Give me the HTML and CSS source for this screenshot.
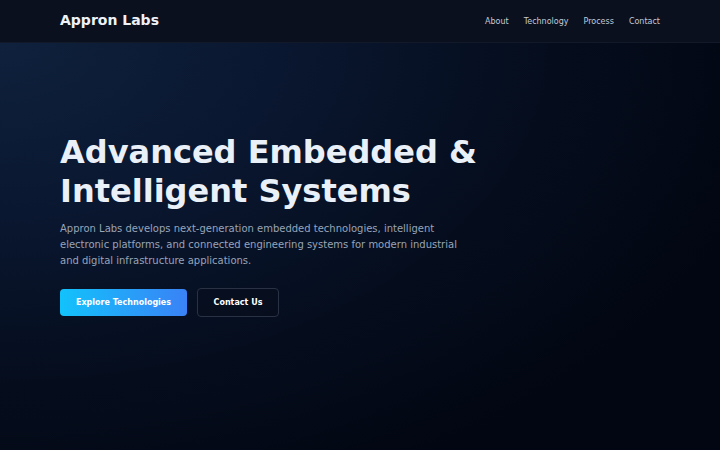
FILE: index.html
```html
<!DOCTYPE html>
<html lang="en">
<head>
<meta charset="utf-8">
<title>Appron Labs</title>
<link rel="stylesheet" href="styles.css">
</head>
<body>
<header class="site-header">
  <div class="header-inner">
    <div class="logo">Appron Labs</div>
    <nav class="nav">
      <a href="#">About</a>
      <a href="#">Technology</a>
      <a href="#">Process</a>
      <a href="#">Contact</a>
    </nav>
  </div>
</header>
<main class="hero">
  <div class="hero-inner">
    <h1 class="hero-title">Advanced Embedded &amp;<br>Intelligent Systems</h1>
    <p class="hero-text">Appron Labs develops next-generation embedded technologies, intelligent electronic platforms, and connected engineering systems for modern industrial and digital infrastructure applications.</p>
    <div class="actions">
      <a href="#" class="btn btn-primary">Explore Technologies</a>
      <a href="#" class="btn btn-outline">Contact Us</a>
    </div>
  </div>
</main>
</body>
</html>
```
FILE: styles.css
```css
* { box-sizing: border-box; }
html, body { margin: 0; padding: 0; }
body {
  font-family: "DejaVu Sans", sans-serif;
  background: #020617;
  color: #e2e8f0;
  width: 720px;
  height: 450px;
  overflow: hidden;
}
.site-header {
  height: 43px;
  background: #0a101e;
  border-bottom: 1px solid #121a2a;
}
.header-inner {
  height: 100%;
  padding: 0 60px;
  display: flex;
  align-items: center;
  justify-content: space-between;
}
.logo {
  font-weight: bold;
  font-size: 14px;
  color: #eef2f8;
  margin-top: -2px;
}
.nav { display: flex; gap: 15px; margin-top: 1px; }
.nav a {
  color: #c3cad6;
  font-size: 8px;
  text-decoration: none;
}
.hero {
  height: 407px;
  background: radial-gradient(ellipse 110% 120% at 0% 0%, #0f213d 0%, #0a1730 35%, #050d1d 70%, #020612 100%);
}
.hero-inner {
  padding: 90px 60px 0;
}
.hero-title {
  margin: 0;
  font-size: 32px;
  line-height: 39px;
  font-weight: bold;
  color: #eaf0f8;
}
.hero-text {
  margin: 10px 0 0;
  width: 410px;
  font-size: 10px;
  line-height: 16px;
  color: #98a4b8;
}
.actions {
  display: flex;
  gap: 10px;
  margin-top: 19px;
  align-items: center;
}
.btn {
  display: inline-flex;
  align-items: center;
  justify-content: center;
  font-size: 8px;
  font-weight: bold;
  text-decoration: none;
  color: #fff;
  border-radius: 4px;
}
.btn-primary {
  width: 127px;
  height: 27px;
  background: linear-gradient(90deg, #12c2fb, #3a82f6);
}
.btn-outline {
  width: 82px;
  height: 29px;
  border: 1px solid #283244;
  background: rgba(8, 14, 28, 0.6);
}
```
